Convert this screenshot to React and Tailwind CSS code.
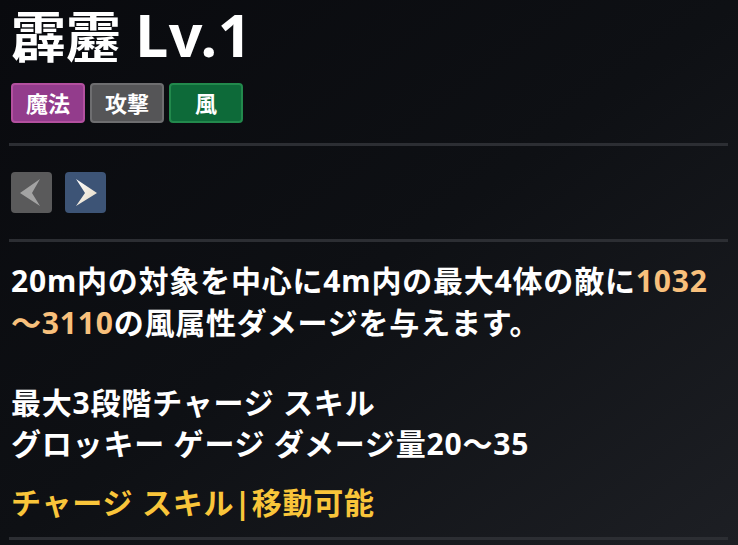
import React from 'react';

const Tag = ({ children, className }) => (
  <div className={`h-[40px] w-[74px] flex items-center justify-center rounded-[4px] border-2 text-[22px] font-bold text-white ${className}`}>
    {children}
  </div>
);

const Divider = () => <div className="h-[3px] w-[719px] -ml-[2px] bg-[#2c2e33]" />;

export default function App() {
  return (
    <div
      className="w-[738px] h-[545px] overflow-hidden bg-gradient-to-br from-[#090a0e] via-[#0e1014] to-[#1d1f24] pl-[11px] text-white"
      style={{ fontFamily: '"Noto Sans", "Noto Sans CJK JP", sans-serif' }}
    >
      {/* Title */}
      <h1 className="text-[55px] font-bold leading-[68px] whitespace-nowrap">
        霹靂 <span className="text-[59px] tracking-[0.5px]">Lv.1</span>
      </h1>

      {/* Tags */}
      <div className="mt-[13px] flex gap-[5px]">
        <Tag className="bg-[#933c8c] border-[#b3509f]">魔法</Tag>
        <Tag className="bg-[#555557] border-[#6e6e70]">攻撃</Tag>
        <Tag className="bg-[#0d6a39] border-[#22894c]">風</Tag>
      </div>

      <div className="mt-[20px]">
        <Divider />
      </div>

      {/* Arrows */}
      <div className="mt-[26px] flex gap-[13px]">
        <button className="h-[41px] w-[41px] rounded-[4px] bg-[#5a5a5b]">
          <svg viewBox="0 0 41 41" className="h-[41px] w-[41px]">
            <polygon points="9,21 29,7 21,21 29,34" fill="#a3a3a3" />
          </svg>
        </button>
        <button className="h-[41px] w-[41px] rounded-[4px] bg-[#3d5476]">
          <svg viewBox="0 0 41 41" className="h-[41px] w-[41px]">
            <defs>
              <linearGradient id="ar" x1="0" y1="0" x2="1" y2="1">
                <stop offset="0" stopColor="#ffffff" />
                <stop offset="1" stopColor="#e2d6c0" />
              </linearGradient>
            </defs>
            <polygon points="11,7 32,21 11,34 20,21" fill="url(#ar)" />
          </svg>
        </button>
      </div>

      <div className="mt-[26px]">
        <Divider />
      </div>

      {/* Description */}
      <div className="mt-[18px] text-[30px] font-bold leading-[42px] tracking-[0.8px] whitespace-nowrap">
        <p>
          20m内の対象を中心に4m内の最大4体の敵に<span className="text-[#f8c07c]">1032</span>
          <br />
          <span className="text-[#f8c07c]">～3110</span>の風属性ダメージを与えます。
        </p>
        <p className="mt-[38px] leading-[41px]">
          最大3段階チャージ スキル
          <br />
          グロッキー ゲージ ダメージ量20～35
        </p>
        <p className="mt-[18px] text-[#f9c53a]">チャージ スキル|移動可能</p>
      </div>

      <div className="mt-[13px]">
        <Divider />
      </div>
    </div>
  );
}
